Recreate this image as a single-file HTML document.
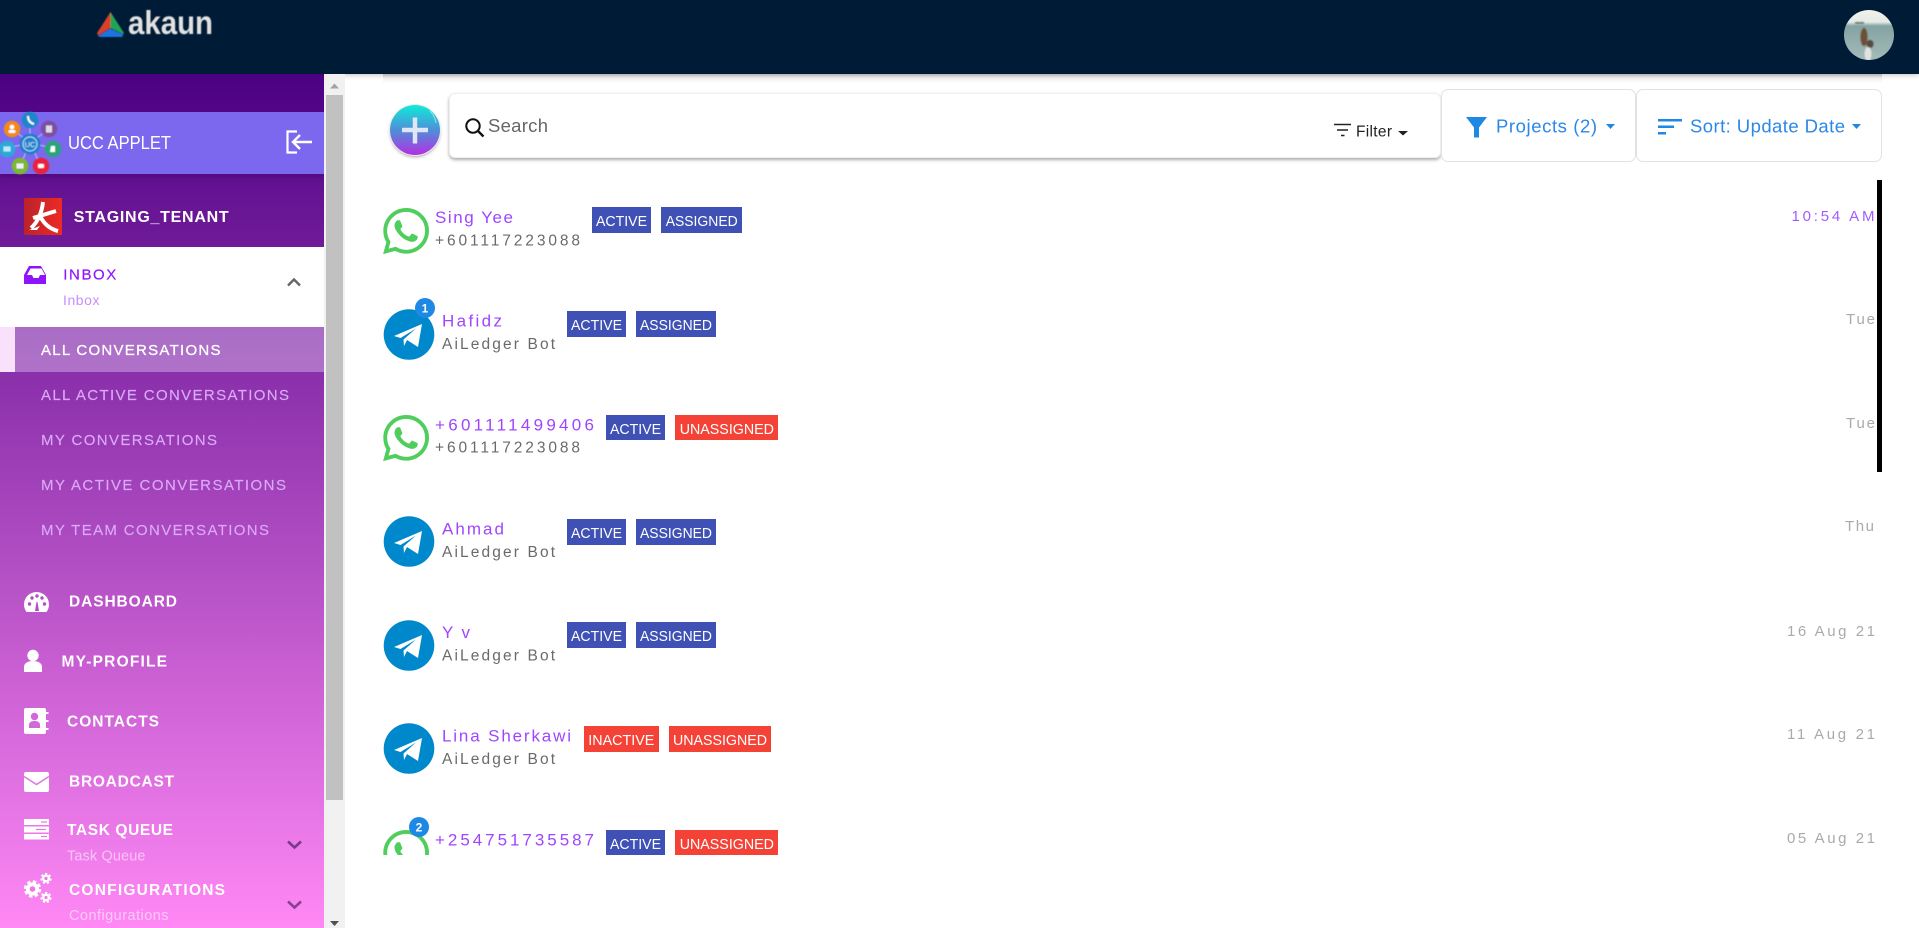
<!DOCTYPE html>
<html lang="en"><head><meta charset="utf-8"><title>Akaun UCC Applet</title>
<style>
html,body{margin:0;padding:0;width:1919px;height:928px;overflow:hidden;background:#fff}
body{position:relative;font-family:"Liberation Sans",sans-serif}
div{position:absolute;box-sizing:border-box}
#shade{left:383px;top:74px;width:1499px;height:10px;background:linear-gradient(#d4d4d4,#f2f2f2 40%,#fff)}
#head{left:0;top:0;width:1919px;height:74px;background:#001b35;box-shadow:0 1px 5px rgba(0,0,0,.25)}
#side{left:0;top:74px;width:324px;height:854px;background:linear-gradient(#4b0082,#ff88f5)}
#ucc{left:0;top:112px;width:324px;height:62px;background:#7b68ee;box-shadow:0 3px 5px rgba(50,0,80,.35)}
#inbox{left:0;top:247px;width:324px;height:80px;background:#fff}
#strip{left:0;top:327px;width:15px;height:45px;background:#f9e0fb}
#act{left:15px;top:327px;width:309px;height:45px;background:linear-gradient(#a96dc5,#b072c9)}
#track{left:324px;top:74px;width:21px;height:854px;background:#f1f1f1}
#thumb{left:326px;top:95px;width:17px;height:705px;background:#c1c1c1}
#search{left:449px;top:93px;width:992px;height:65px;background:#fff;border:1px solid #eee;border-radius:6px;box-shadow:0 2px 3px rgba(0,0,0,.32)}
.tb{top:89px;height:73px;background:#fff;border:1px solid #e2e2e2;border-radius:7px}
#add{left:390px;top:105px;width:50px;height:50px;border-radius:50%;background:linear-gradient(#10ebd8,#4e8fd8 50%,#b52fe2);box-shadow:0 0 0 1px #eee,0 2px 3px rgba(0,0,0,.35)}
#bar{left:1877px;top:180px;width:5px;height:292px;background:#000}
svg#o{position:absolute;left:0;top:0}
text{font-family:"Liberation Sans",sans-serif}
.nav{fill:#fff;font-size:15.5px;font-weight:700}
.sub{fill:#dba9f7;font-size:15px;stroke:#dba9f7;stroke-width:.15}
.hint{fill:#fff;fill-opacity:.55;font-size:14.5px}
.nm{fill:#a045ff;font-size:17px}
.ph{fill:#6a6a6a;font-size:15.5px}
.bt{fill:#fff;font-size:15px}
.tm{fill:#aaa;font-size:15px}
.blue{fill:#2b88e8;font-size:18.5px}
</style></head>
<body>
<div id="shade"></div>
<div id="head"></div>
<div id="side"></div>
<div id="ucc"></div>
<div id="inbox"></div>
<div id="strip"></div>
<div id="act"></div>
<div id="track"></div>
<div id="thumb"></div>
<div id="search"></div>
<div class="tb" style="left:1441px;width:195px"></div>
<div class="tb" style="left:1636px;width:246px"></div>
<div id="add"></div>
<div id="bar"></div>
<svg id="o" width="1919" height="928" viewBox="0 0 1919 928" xmlns="http://www.w3.org/2000/svg">
<defs>
<path id="wa" d="M17.472 14.382c-.297-.149-1.758-.867-2.03-.967-.273-.099-.471-.148-.67.15-.197.297-.767.966-.94 1.164-.173.199-.347.223-.644.075-.297-.15-1.255-.463-2.39-1.475-.883-.788-1.48-1.761-1.653-2.059-.173-.297-.018-.458.13-.606.134-.133.298-.347.446-.52.149-.174.198-.298.298-.497.099-.198.05-.371-.025-.52-.075-.149-.669-1.612-.916-2.207-.242-.579-.487-.5-.669-.51-.173-.008-.371-.01-.57-.01-.198 0-.52.074-.792.372-.272.297-1.04 1.016-1.04 2.479 0 1.462 1.065 2.875 1.213 3.074.149.198 2.096 3.2 5.077 4.487.709.306 1.262.489 1.694.625.712.227 1.36.195 1.871.118.571-.085 1.758-.719 2.006-1.413.248-.694.248-1.289.173-1.413-.074-.124-.272-.198-.57-.347m-5.421 7.403h-.004a9.87 9.87 0 01-5.031-1.378l-.361-.214-3.741.982.998-3.648-.235-.374a9.86 9.86 0 01-1.51-5.26c.001-5.45 4.436-9.884 9.888-9.884 2.64 0 5.122 1.03 6.988 2.898a9.825 9.825 0 012.893 6.994c-.003 5.45-4.437 9.884-9.885 9.884m8.413-18.297A11.815 11.815 0 0012.05 0C5.495 0 .16 5.335.157 11.892c0 2.096.547 4.142 1.588 5.945L.057 24l6.305-1.654a11.882 11.882 0 005.683 1.448h.005c6.554 0 11.89-5.335 11.893-11.893a11.821 11.821 0 00-3.48-8.413z"/>
<g id="tg"><circle cx="25" cy="25.5" r="25.3" fill="#0088cc"/><path fill="#fff" d="M10 27L38 15L34 38L23 31L20 37L19.5 30.5L32 19.5L16.5 29Z"/></g>
<clipPath id="av"><circle cx="1869" cy="35" r="25"/></clipPath>
<clipPath id="wc"><rect x="375" y="825" width="60" height="30"/></clipPath>
<linearGradient id="rd" x1="0" y1="0" x2="1" y2="0"><stop offset="0" stop-color="#b9232b"/><stop offset="1" stop-color="#ee2a24"/></linearGradient>
<linearGradient id="sky" x1="0" y1="0" x2="0" y2="1"><stop offset="0" stop-color="#f1f2ec"/><stop offset=".24" stop-color="#e6ebe6"/><stop offset=".32" stop-color="#84a3a3"/><stop offset="1" stop-color="#a4bbb9"/></linearGradient>
<filter id="sf" x="-5%" y="-5%" width="110%" height="110%"><feGaussianBlur stdDeviation=".45"/></filter>
<filter id="sg" x="-5%" y="-5%" width="110%" height="110%"><feGaussianBlur stdDeviation=".8"/></filter>
</defs>

<!-- header logo -->
<g filter="url(#sf)">
<path fill="#d9412b" d="M110.500 12L97 33L98 35.500L110.500 28Z"/>
<path fill="#23a455" d="M110.500 12L124 33L123 34L110.500 28Z"/>
<path fill="#1e74dc" d="M98 36L110.500 28.500L123.500 34.500L122 37L99.500 37Z"/>
<text x="128" y="34" font-size="33" font-weight="700" fill="#e2e2e2" textLength="85" lengthAdjust="spacingAndGlyphs">akaun</text>
</g>
<!-- avatar -->
<g clip-path="url(#av)">
<rect x="1844" y="10" width="50" height="50" fill="url(#sky)"/>
<g filter="url(#sg)">
<rect x="1855" y="22" width="9" height="2" fill="#66807f"/>
<ellipse cx="1864" cy="37" rx="3.500" ry="9" fill="#6d4f35"/>
<ellipse cx="1870" cy="44" rx="3.500" ry="4" fill="#56483c"/>
<ellipse cx="1868" cy="54" rx="3.500" ry="7" fill="#dfe4e2"/>
</g>
</g>

<!-- UCC cluster -->
<g filter="url(#sf)">
<g stroke="#b7c4ef" stroke-width="1"><path d="M30 143L30 120M30 143L12 129M30 143L49 129M30 143L53 148M30 143L7 148M30 143L20 166M30 143L41 166"/></g>
<circle cx="30" cy="120" r="8.300" fill="#1b86c9"/><circle cx="12" cy="129" r="8.300" fill="#f08a1a"/><circle cx="49" cy="129" r="8.300" fill="#7e4ea4"/><circle cx="53" cy="149" r="8.300" fill="#2ba57a"/><circle cx="7" cy="149" r="8.300" fill="#2ba9d9"/><circle cx="20" cy="166" r="8.300" fill="#7cb82f"/><circle cx="41" cy="166" r="8.300" fill="#e8233e"/>
<circle cx="30" cy="144" r="10.500" fill="#1a80cc"/><circle cx="30" cy="144" r="7" fill="none" stroke="#bfe3f7" stroke-width="1"/>
<text x="30" y="147" font-size="7.500" fill="#d9f0fb" text-anchor="middle">UC</text>
<path d="M28 116c0 4 2 7 6 8" stroke="#fff" stroke-width="2" fill="none"/>
<circle cx="12" cy="127" r="2.300" fill="#fff"/><rect x="8.500" y="130" width="7" height="3" rx="1.500" fill="#fff"/>
<rect x="46" y="125.500" width="6" height="7" fill="#ddd"/><path d="M51 146h4v6h-5z" fill="#fff"/>
<rect x="3.500" y="146.500" width="7" height="5" fill="#bfe9f7"/><rect x="16.500" y="163.500" width="7" height="5" fill="#eef"/><rect x="38" y="164" width="6" height="4" rx="1" fill="#fff"/>
</g>
<text x="68" y="149" font-size="18" fill="#fff" textLength="103" lengthAdjust="spacingAndGlyphs">UCC APPLET</text>
<path d="M297 131.500h-9.500v21h9.500" fill="none" stroke="#fff" stroke-width="2.200"/>
<path d="M312 142h-19M300 135l-7 7l7 7" fill="none" stroke="#fff" stroke-width="2.400"/>

<!-- tenant -->
<rect x="24" y="198" width="38" height="37" fill="url(#rd)"/>
<path d="M43 202C42 212 38 222 31 228M33 218L56 211M40 216C44 224 50 229 58 231" fill="none" stroke="#fff" stroke-width="4"/>
<path d="M29 230h8l3-4z" fill="#fff"/>
<text class="nav" x="73.700" y="222" style="font-size:16px" textLength="155">STAGING_TENANT</text>

<!-- inbox -->
<path fill="#9013fe" fill-rule="evenodd" d="M29 266h12l5 9v9H24v-9zM30.500 268.500l-3.500 6.500h5l1.500 3h5l1.500-3h5l-3.500-6.500z"/>
<text x="63.300" y="279.500" font-size="15" fill="#9013fe" stroke="#9013fe" stroke-width=".2" textLength="53">INBOX</text>
<text x="63" y="305" font-size="14" fill="#c78ffa" textLength="36.500">Inbox</text>
<path d="M288 285.500l6-6l6 6" fill="none" stroke="#666" stroke-width="2.400"/>

<!-- submenu -->
<text x="41" y="355" font-size="15" fill="#fff" stroke="#fff" stroke-width=".3" textLength="179.500">ALL CONVERSATIONS</text>
<text class="sub" x="41" y="400" textLength="248">ALL ACTIVE CONVERSATIONS</text>
<text class="sub" x="41" y="445" textLength="176">MY CONVERSATIONS</text>
<text class="sub" x="41" y="490" textLength="245">MY ACTIVE CONVERSATIONS</text>
<text class="sub" x="41" y="535" textLength="228">MY TEAM CONVERSATIONS</text>

<!-- nav icons + labels -->
<path fill="#fff" d="M26.500 612a12.500 12.500 0 1 1 20 0z"/>
<g fill="#b14dc5"><circle cx="29.500" cy="604" r="1.700"/><circle cx="32" cy="598" r="1.700"/><circle cx="37" cy="596" r="1.700"/><circle cx="42" cy="598" r="1.700"/><circle cx="44.500" cy="604" r="1.700"/><path d="M35 611l1.500-9h1l1.500 9z"/></g>
<text class="nav" x="69" y="606.700" textLength="108">DASHBOARD</text>

<circle cx="33" cy="655.500" r="5.700" fill="#fff"/><path fill="#fff" d="M24 672v-5c0-4 4-6 9-6s9 2 9 6v5z"/>
<text class="nav" x="61.500" y="666.700" textLength="105.500">MY-PROFILE</text>

<rect x="24" y="708" width="22" height="26" rx="2" fill="#fff"/><path stroke="#fff" stroke-width="2" d="M46 713h2.500M46 721h2.500M46 729h2.500"/>
<circle cx="34.500" cy="716.500" r="3.700" fill="#d268d9"/><path fill="#d268d9" d="M29 728v-3c0-3 2.500-4 5.500-4s5.500 1 5.500 4v3z"/>
<text class="nav" x="67" y="726.700" textLength="92">CONTACTS</text>

<rect x="24" y="772" width="25" height="20" rx="2" fill="#fff"/><path d="M24 776.500l12.500 8l12.500-8" fill="none" stroke="#e074e2" stroke-width="1.500"/>
<text class="nav" x="69" y="786.700" textLength="105">BROADCAST</text>

<path fill="#fff" d="M24 819h25v6H24zM24 826.500h25v6H24zM24 834h25v5.500H24z"/>
<path stroke="#e77ae6" stroke-width="1.300" d="M41 822h6M36 829.500h10M41 836.500h6"/>
<text class="nav" x="67" y="835" textLength="106">TASK QUEUE</text>
<text class="hint" x="67" y="860.300" textLength="78.500">Task Queue</text>
<path d="M288 841.500l6.500 6l6.500-6" fill="none" stroke="#7a3a87" stroke-width="2.600"/>

<g fill="#fff">
<circle cx="32.500" cy="889" r="6.500"/><circle cx="32.500" cy="889" r="7.500" fill="none" stroke="#fff" stroke-width="2.400" stroke-dasharray="3.500 2.400"/><circle cx="32.500" cy="889" r="2.800" fill="#ec78e8"/>
<circle cx="46" cy="878.500" r="4"/><circle cx="46" cy="878.500" r="4.700" fill="none" stroke="#fff" stroke-width="1.800" stroke-dasharray="2.200 2"/><circle cx="46" cy="878.500" r="1.600" fill="#ea76e6"/>
<circle cx="46" cy="897.500" r="4"/><circle cx="46" cy="897.500" r="4.700" fill="none" stroke="#fff" stroke-width="1.800" stroke-dasharray="2.200 2"/><circle cx="46" cy="897.500" r="1.600" fill="#ef7bec"/>
</g>
<text class="nav" x="69" y="895" textLength="156">CONFIGURATIONS</text>
<text class="hint" x="69" y="920" textLength="99.500">Configurations</text>
<path d="M288 901.500l6.500 6l6.500-6" fill="none" stroke="#86428f" stroke-width="2.600"/>

<!-- scrollbar arrows -->
<path fill="#a3a3a3" d="M330 88.500L334.500 83.500L339 88.500Z"/>
<path fill="#505050" d="M330 921L334.500 926L339 921Z"/>

<!-- toolbar -->
<path d="M402 130h26M415 117.500v26" stroke="#dfe6f5" stroke-width="4.500" fill="none"/>
<path d="M430 111a16 20 0 0 1 6 12" stroke="#fff" stroke-opacity=".5" fill="none"/>
<circle cx="473" cy="126" r="6.700" fill="none" stroke="#111" stroke-width="2"/><path d="M478 131l5.500 5.500" stroke="#111" stroke-width="2.300"/>
<text x="488" y="132" font-size="18.500" fill="#666" textLength="60">Search</text>
<path d="M1334 124.500h17M1337 130h11M1341 135.500h3.500" stroke="#222" stroke-width="1.500"/>
<text x="1356" y="136.700" font-size="15.500" fill="#222" textLength="36">Filter</text>
<path fill="#222" d="M1398 131h10l-5 4.500z"/>
<path fill="#1e88e5" d="M1466 117h21l-8 10.500v10h-5v-10z"/>
<text class="blue" x="1496" y="132.700" textLength="101">Projects (2)</text>
<path fill="#1e88e5" d="M1606 124h9l-4.500 5z"/>
<path fill="#1e88e5" d="M1658 119h24v2.500h-24zM1658 125.500h16v2.500h-16zM1658 132h8v2.500h-8z"/>
<text class="blue" x="1690" y="132.700" textLength="155">Sort: Update Date</text>
<path fill="#1e88e5" d="M1852 124h9l-4.500 5z"/>

<!-- row 0 -->
<use href="#wa" transform="translate(383,208) scale(1.92)" fill="#4fce5d"/>
<text class="nm" x="435" y="223" textLength="78">Sing Yee</text>
<text class="ph" x="435" y="245.700" textLength="145">+601117223088</text>
<rect x="592" y="207" width="59" height="26" fill="#3f51b5"/><text class="bt" x="596" y="226" textLength="51" lengthAdjust="spacingAndGlyphs">ACTIVE</text>
<rect x="661" y="207" width="81" height="26" fill="#3f51b5"/><text class="bt" x="665.700" y="226" textLength="72" lengthAdjust="spacingAndGlyphs">ASSIGNED</text>
<text class="tm" x="1791.500" y="221" style="fill:#a35cff" textLength="83">10:54 AM</text>

<!-- row 1 -->
<use href="#tg" transform="translate(384,309)"/>
<circle cx="425" cy="308" r="10" fill="#1e88e5"/><text x="425" y="312.500" font-size="12" font-weight="700" fill="#fff" text-anchor="middle">1</text>
<text class="nm" x="442" y="326.700" textLength="60">Hafidz</text>
<text class="ph" x="442" y="349" textLength="113">AiLedger Bot</text>
<rect x="567" y="311" width="59" height="26" fill="#3f51b5"/><text class="bt" x="571" y="330" textLength="51" lengthAdjust="spacingAndGlyphs">ACTIVE</text>
<rect x="636" y="311" width="80" height="26" fill="#3f51b5"/><text class="bt" x="640" y="330" textLength="72" lengthAdjust="spacingAndGlyphs">ASSIGNED</text>
<text class="tm" x="1846" y="324" textLength="29">Tue</text>

<!-- row 2 -->
<use href="#wa" transform="translate(383,415) scale(1.92)" fill="#4fce5d"/>
<text class="nm" x="435" y="430.700" textLength="159">+601111499406</text>
<text class="ph" x="435" y="452.700" textLength="145">+601117223088</text>
<rect x="606" y="415" width="59" height="25" fill="#3f51b5"/><text class="bt" x="610" y="434" textLength="51" lengthAdjust="spacingAndGlyphs">ACTIVE</text>
<rect x="675" y="415" width="103" height="25" fill="#f44336"/><text class="bt" x="679.700" y="434" textLength="94.300" lengthAdjust="spacingAndGlyphs">UNASSIGNED</text>
<text class="tm" x="1846" y="428" textLength="29">Tue</text>

<!-- row 3 -->
<use href="#tg" transform="translate(384,516)"/>
<text class="nm" x="442" y="534.500" textLength="62">Ahmad</text>
<text class="ph" x="442" y="557" textLength="113">AiLedger Bot</text>
<rect x="567" y="519" width="59" height="26" fill="#3f51b5"/><text class="bt" x="571" y="538" textLength="51" lengthAdjust="spacingAndGlyphs">ACTIVE</text>
<rect x="636" y="519" width="80" height="26" fill="#3f51b5"/><text class="bt" x="640" y="538" textLength="72" lengthAdjust="spacingAndGlyphs">ASSIGNED</text>
<text class="tm" x="1845" y="531" textLength="29">Thu</text>

<!-- row 4 -->
<use href="#tg" transform="translate(384,620)"/>
<text class="nm" x="442" y="638" textLength="28">Y v</text>
<text class="ph" x="442" y="660.500" textLength="113">AiLedger Bot</text>
<rect x="567" y="622" width="59" height="26" fill="#3f51b5"/><text class="bt" x="571" y="641" textLength="51" lengthAdjust="spacingAndGlyphs">ACTIVE</text>
<rect x="636" y="622" width="80" height="26" fill="#3f51b5"/><text class="bt" x="640" y="641" textLength="72" lengthAdjust="spacingAndGlyphs">ASSIGNED</text>
<text class="tm" x="1787" y="636" textLength="88">16 Aug 21</text>

<!-- row 5 -->
<use href="#tg" transform="translate(384,723)"/>
<text class="nm" x="442" y="741.300" textLength="129">Lina Sherkawi</text>
<text class="ph" x="442" y="764" textLength="113">AiLedger Bot</text>
<rect x="584" y="726" width="75" height="26" fill="#f44336"/><text class="bt" x="588.300" y="745" textLength="66" lengthAdjust="spacingAndGlyphs">INACTIVE</text>
<rect x="669" y="726" width="102" height="26" fill="#f44336"/><text class="bt" x="673" y="745" textLength="94" lengthAdjust="spacingAndGlyphs">UNASSIGNED</text>
<text class="tm" x="1787" y="739" textLength="88">11 Aug 21</text>

<!-- row 6 -->
<g clip-path="url(#wc)"><use href="#wa" transform="translate(383,830) scale(1.92)" fill="#4fce5d"/></g>
<circle cx="419" cy="827" r="10" fill="#1e88e5"/><text x="419" y="831.500" font-size="12" font-weight="700" fill="#fff" text-anchor="middle">2</text>
<text class="nm" x="435" y="845.700" textLength="159">+254751735587</text>
<rect x="606" y="830" width="59" height="25" fill="#3f51b5"/><text class="bt" x="610" y="849" textLength="51" lengthAdjust="spacingAndGlyphs">ACTIVE</text>
<rect x="675" y="830" width="103" height="25" fill="#f44336"/><text class="bt" x="679.700" y="849" textLength="94.300" lengthAdjust="spacingAndGlyphs">UNASSIGNED</text>
<text class="tm" x="1787" y="843" textLength="88">05 Aug 21</text>
</svg>
</body></html>
